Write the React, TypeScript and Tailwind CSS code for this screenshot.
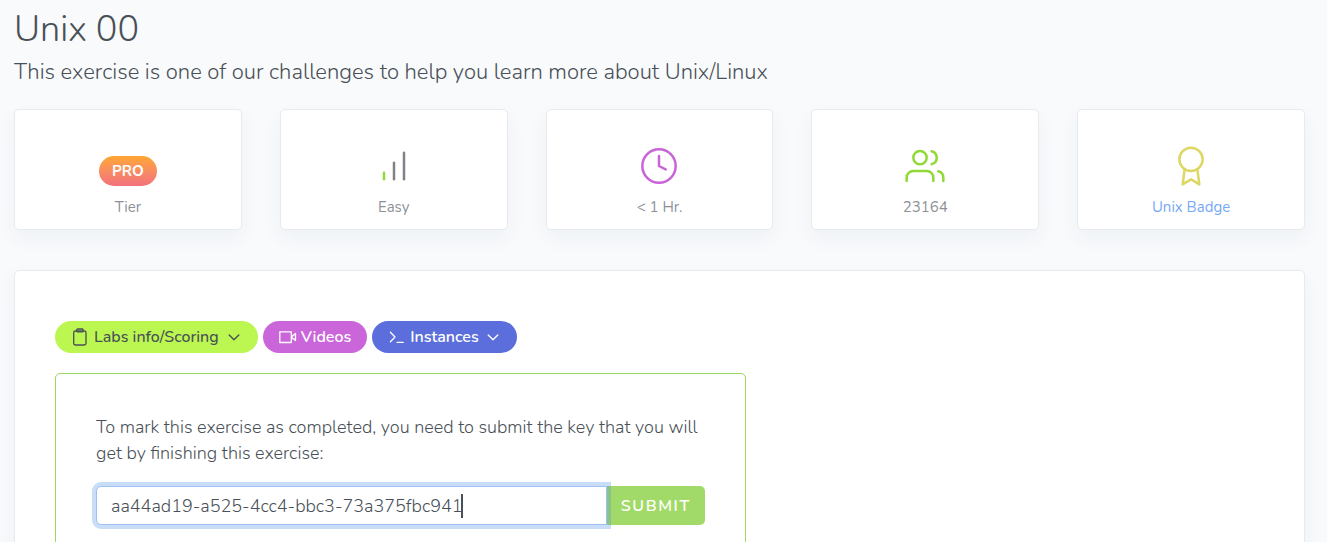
import React, { useState } from "react";

type IconProps = { className?: string; children: React.ReactNode };

function StatIcon({ className = "", children }: IconProps) {
  return (
    <svg
      viewBox="0 0 24 24"
      className={`size-10 ${className}`}
      fill="none"
      stroke="currentColor"
      strokeWidth="1.5"
      strokeLinecap="round"
      strokeLinejoin="round"
      aria-hidden="true"
    >
      {children}
    </svg>
  );
}

function SmallIcon({ className = "", children }: IconProps) {
  return (
    <svg
      viewBox="0 0 18 18"
      className={`size-[18px] shrink-0 ${className}`}
      fill="none"
      stroke="currentColor"
      strokeWidth="1.3"
      strokeLinecap="round"
      strokeLinejoin="round"
      aria-hidden="true"
    >
      {children}
    </svg>
  );
}

function Chevron() {
  return (
    <svg viewBox="0 0 12 12" className="size-3 shrink-0" fill="none" stroke="currentColor" strokeWidth="1.4" strokeLinecap="round" strokeLinejoin="round" aria-hidden="true">
      <path d="M1.2 4 6 8.8 10.8 4" />
    </svg>
  );
}

function StatCard({ icon, children }: { icon: React.ReactNode; children: React.ReactNode }) {
  return (
    <li className="flex flex-col items-center gap-[9px] rounded-[5px] border border-[#e8eaed] bg-white pt-9 pb-2.5 text-[15px] leading-6 text-[#8d9298] shadow-[0_8px_20px_rgba(60,70,90,0.05)]">
      <div className="flex h-10 items-end">{icon}</div>
      {children}
    </li>
  );
}

export default function App() {
  const [key, setKey] = useState("aa44ad19-a525-4cc4-bbc3-73a375fbc941");

  return (
    <main className="min-h-screen bg-[#f8fafc] pt-2 pr-[22px] pb-10 pl-3.5 font-['Nunito','Lato',sans-serif] text-[#495057]">
      <h1 className="text-[36px] leading-[44px] font-light">Unix 00</h1>
      <p className="mt-[5px] text-[22px] leading-[30px] font-light">
        This exercise is one of our challenges to help you learn more about Unix/Linux
      </p>

      <ul className="mt-[22px] grid grid-cols-5 gap-[38px]">
        <StatCard
          icon={
            <span className="rounded-full bg-linear-to-b from-[#ffa62e] to-[#f2707c] px-[13px] py-[5px] text-[15px] leading-5 font-bold text-white">
              PRO
            </span>
          }
        >
          Tier
        </StatCard>
        <StatCard
          icon={
            <StatIcon className="text-[#7f8387]">
              <path d="M12 20V10" />
              <path d="M18 20V4" />
              <path d="M6 20v-4" stroke="#90d936" />
            </StatIcon>
          }
        >
          Easy
        </StatCard>
        <StatCard
          icon={
            <StatIcon className="text-[#c964d9]">
              <circle cx="12" cy="12" r="10" />
              <path d="M12 6v6l4 2" />
            </StatIcon>
          }
        >
          &lt; 1 Hr.
        </StatCard>
        <StatCard
          icon={
            <StatIcon className="text-[#90d936]">
              <path d="M17 21v-2a4 4 0 0 0-4-4H5a4 4 0 0 0-4 4v2" />
              <circle cx="9" cy="7" r="4" />
              <path d="M23 21v-2a4 4 0 0 0-3-3.87" />
              <path d="M16 3.13a4 4 0 0 1 0 7.75" />
            </StatIcon>
          }
        >
          23164
        </StatCard>
        <StatCard
          icon={
            <StatIcon className="text-[#ddd763]">
              <circle cx="12" cy="8" r="7" />
              <path d="M8.21 13.89 7 23l5-3 5 3-1.21-9.12" />
            </StatIcon>
          }
        >
          <a href="#badge" className="text-[#78a9f5]">
            Unix Badge
          </a>
        </StatCard>
      </ul>

      <section className="mt-10 rounded-[5px] border border-[#e8eaed] bg-white px-10 pt-[50px] pb-10 shadow-[0_8px_20px_rgba(60,70,90,0.05)]">
        <div className="flex flex-wrap gap-[5px] text-[16px] leading-8">
          <button type="button" className="flex h-8 items-center rounded-full bg-[#bcf651] px-[18px] pl-4 font-medium text-[#495057]">
            <SmallIcon>
              <rect x="2.7" y="3" width="12.3" height="14" rx="1.8" />
              <path d="M5.8 3V1.8q0-.8.8-.8h4.6q.8 0 .8.8V3q0 .9-.8.9H6.6Q5.8 3.9 5.8 3Z" />
            </SmallIcon>
            <span className="mr-[9px] ml-[5px]">Labs info/Scoring</span>
            <Chevron />
          </button>
          <button type="button" className="flex h-8 items-center rounded-full bg-[#ca65da] px-4 font-semibold text-white">
            <SmallIcon>
              <path d="M.8 3.8h11.5v10.7H.8z M12.3 9l4.2-3.6v7.2z" />
            </SmallIcon>
            <span className="ml-1">Videos</span>
          </button>
          <button type="button" className="flex h-8 items-center rounded-full bg-[#5b6edc] px-[18px] pl-4 font-semibold text-white">
            <SmallIcon>
              <path d="M2.4 4.3 7 9l-4.6 4.7M9 14.3h6.3" />
            </SmallIcon>
            <span className="mr-2 ml-1">Instances</span>
            <Chevron />
          </button>
        </div>

        <form
          className="mt-5 w-4/7 rounded-[5px] border border-solid border-[#98d95e] p-10"
          onSubmit={(event) => event.preventDefault()}
        >
          <label htmlFor="exercise-key" className="block text-[18px] leading-[26px] font-light">
            To mark this exercise as completed, you need to submit the key that you will get by finishing this exercise:
          </label>
          <div className="mt-5 flex h-[39px]">
            <div className="relative z-10 min-w-0 flex-1">
              <input
                id="exercise-key"
                value={key}
                onChange={(event) => setKey(event.target.value)}
                className="h-full w-full rounded-l-[5px] border border-[#9dc0f5] bg-white px-3.5 text-[18px] font-light text-[#495057] shadow-[0_0_0_4px_rgba(78,142,233,0.3)] outline-none"
              />
              <span className="absolute top-2 left-[365px] h-6 w-0.5 bg-[#495057]" aria-hidden="true" />
            </div>
            <button type="submit" className="rounded-r-[5px] bg-[#a1da68] px-3.5 text-[16px] font-semibold tracking-widest text-white">
              SUBMIT
            </button>
          </div>
        </form>
      </section>
    </main>
  );
}
